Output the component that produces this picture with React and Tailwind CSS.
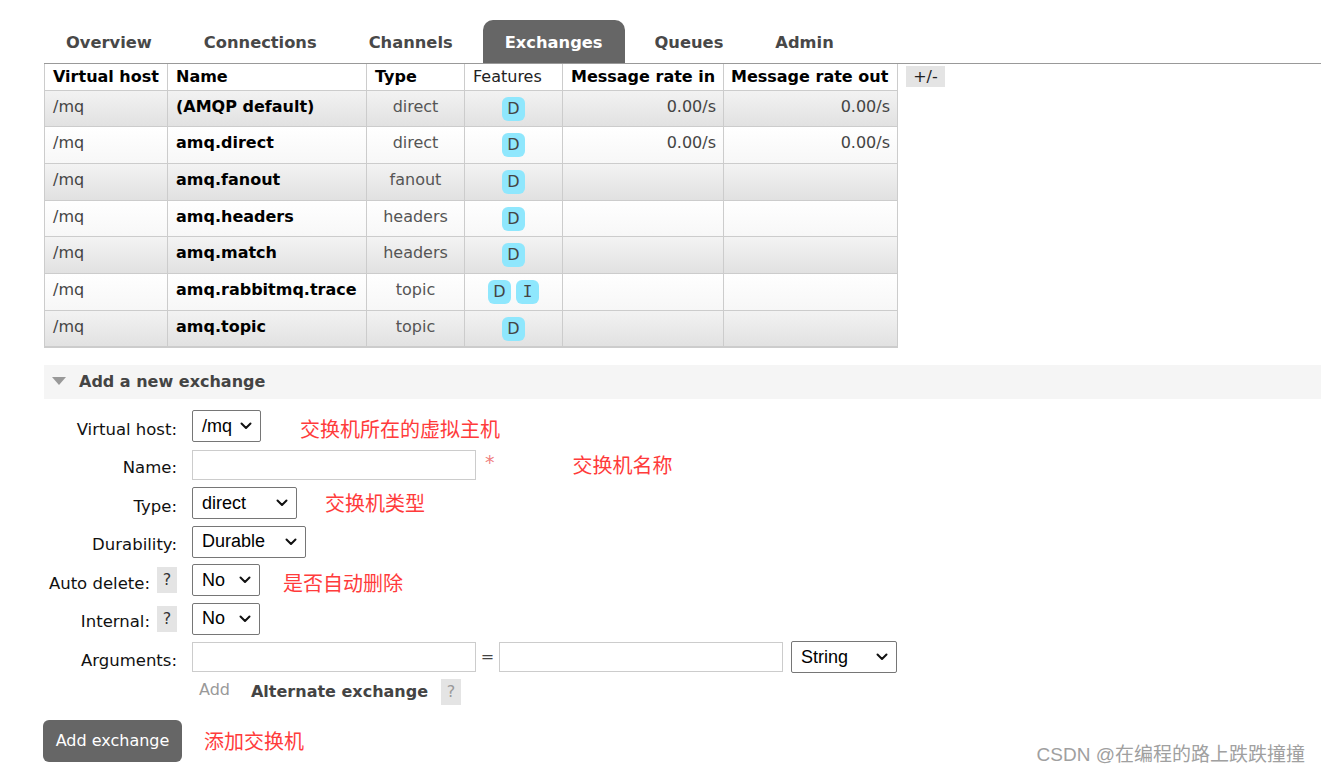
import React from "react";

const rows = [
  { name: "(AMQP default)", type: "direct", f: ["D"], rin: "0.00/s", rout: "0.00/s" },
  { name: "amq.direct", type: "direct", f: ["D"], rin: "0.00/s", rout: "0.00/s" },
  { name: "amq.fanout", type: "fanout", f: ["D"], rin: "", rout: "" },
  { name: "amq.headers", type: "headers", f: ["D"], rin: "", rout: "" },
  { name: "amq.match", type: "headers", f: ["D"], rin: "", rout: "" },
  { name: "amq.rabbitmq.trace", type: "topic", f: ["D", "I"], rin: "", rout: "" },
  { name: "amq.topic", type: "topic", f: ["D"], rin: "", rout: "" },
];

const tabs = ["Overview", "Connections", "Channels", "Exchanges", "Queues", "Admin"];

function Chevron() {
  return (
    <svg width="12" height="8" viewBox="0 0 12 8" className="shrink-0">
      <path d="M1.5 1.5 L6 6 L10.5 1.5" fill="none" stroke="#111" strokeWidth="2" strokeLinecap="round" strokeLinejoin="round" />
    </svg>
  );
}

function Select({ value, className }) {
  return (
    <div
      className={
        "flex items-center justify-between h-[32px] border border-[#767676] rounded-[2px] bg-white pl-[9px] pr-[8px] font-['Liberation_Sans',Arial,sans-serif] text-[18px] text-black " +
        className
      }
    >
      <span>{value}</span>
      <Chevron />
    </div>
  );
}

function Help({ light }) {
  return (
    <span
      className={
        "inline-flex items-center justify-center w-[20px] h-[26px] bg-[#e4e4e4] text-[16px] " +
        (light ? "text-[#999]" : "text-[#333]")
      }
    >
      ?
    </span>
  );
}

function Note({ children, className }) {
  return (
    <span
      className={
        "font-['Noto_Sans_CJK_SC','Noto_Sans',sans-serif] text-[20px] leading-none text-[#ff3b3b] " + (className || "")
      }
    >
      {children}
    </span>
  );
}

function Row({ label, help, children }) {
  return (
    <div className="flex items-center h-[38.5px]">
      <div className="w-[148px] pr-[15px] flex items-center justify-end gap-[7px] shrink-0">
        <span className="pt-[8px] text-[16.5px] text-[#111] whitespace-nowrap">{label}</span>
        {help && <Help />}
      </div>
      {children}
    </div>
  );
}

export default function App() {
  return (
    <div className="relative w-[1321px] h-[774px] overflow-hidden bg-white font-['DejaVu_Sans',Verdana,sans-serif] text-[#222]">
      {/* Tabs */}
      <div className="pt-[20px] pl-[44px]">
        <div className="flex gap-[8px] border-b border-[#999]">
          {tabs.map((t) => (
            <div
              key={t}
              className={
                "h-[43px] px-[22px] pt-[3px] flex items-center rounded-t-[10px] text-[16.3px] font-bold " +
                (t === "Exchanges" ? "bg-[#666] text-white" : "text-[#484848]")
              }
            >
              {t}
            </div>
          ))}
        </div>

        {/* Table */}
        <div className="flex items-start gap-[8px]">
          <table className="table-fixed border-collapse w-[853px] text-[16px]">
            <colgroup>
              <col className="w-[123px]" />
              <col className="w-[199px]" />
              <col className="w-[98px]" />
              <col className="w-[98px]" />
              <col className="w-[161px]" />
              <col className="w-[174px]" />
            </colgroup>
            <thead>
              <tr className="h-[26px] bg-white">
                <th className="text-left font-bold text-black pl-[8px] border-l border-r border-[#ccc] whitespace-nowrap">Virtual host</th>
                <th className="text-left font-bold text-black pl-[8px] border-r border-[#ccc]">Name</th>
                <th className="text-left font-bold text-black pl-[8px] border-r border-[#ccc]">Type</th>
                <th className="text-left font-normal text-[#222] pl-[8px] border-r border-[#ccc]">Features</th>
                <th className="text-left font-bold text-black pl-[8px] border-r border-[#ccc] whitespace-nowrap">Message rate in</th>
                <th className="text-left font-bold text-black pl-[7px] border-r border-[#ccc] whitespace-nowrap">Message rate out</th>
              </tr>
            </thead>
            <tbody>
              {rows.map((r, i) => (
                <tr
                  key={r.name}
                  className={
                    "h-[36.7px] " +
                    (i % 2 === 0
                      ? "bg-linear-to-b from-[#f3f3f3] to-[#e1e1e1]"
                      : "bg-linear-to-b from-white to-[#f7f7f7]")
                  }
                >
                  <td className="align-top pt-[6px] leading-[20px] pl-[8px] text-[#444] border-l border-r border-t border-[#ccc]">/mq</td>
                  <td className="align-top pt-[6px] leading-[20px] pl-[8px] font-bold text-black border-r border-t border-[#ccc] whitespace-nowrap">{r.name}</td>
                  <td className="align-top pt-[6px] leading-[20px] text-center text-[#555] border-r border-t border-[#ccc]">{r.type}</td>
                  <td className="align-top pt-[6px] border-r border-t border-[#ccc]">
                    <div className="flex justify-center gap-[5px]">
                      {r.f.map((f) => (
                        <span
                          key={f}
                          className={
                            "w-[23px] h-[24px] rounded-[6px] bg-[#8fe7fd] text-[#444] text-[16px] flex items-center justify-center " +
                            (f === "I" ? "font-['DejaVu_Sans_Mono',monospace]" : "")
                          }
                        >
                          {f}
                        </span>
                      ))}
                    </div>
                  </td>
                  <td className="align-top pt-[6px] leading-[20px] text-right pr-[7px] text-[#444] border-r border-t border-[#ccc]">{r.rin}</td>
                  <td className="align-top pt-[6px] leading-[20px] text-right pr-[7px] text-[#444] border-r border-t border-[#ccc]">{r.rout}</td>
                </tr>
              ))}
              <tr className="h-0">
                <td colSpan={6} className="p-0 border-t-2 border-[#ccc]"></td>
              </tr>
            </tbody>
          </table>
          <div className="mt-[2px] w-[39px] h-[21px] bg-[#e4e4e4] text-[16px] text-[#222] flex items-center justify-center">
            +/-
          </div>
        </div>

        {/* Section header */}
        <div className="mt-[17px] h-[34px] bg-[#f5f5f5] flex items-center pl-[8px] gap-[13px]">
          <svg width="14" height="9" viewBox="0 0 14 9">
            <path d="M0 0 L14 0 L7 8 Z" fill="#999" />
          </svg>
          <span className="text-[16px] font-bold text-[#444]">Add a new exchange</span>
        </div>

        {/* Form */}
        <div className="pt-[8px]">
          <Row label="Virtual host:">
            <Select value="/mq" className="w-[69px]" />
            <Note className="ml-[39px] mt-[6px]">交换机所在的虚拟主机</Note>
          </Row>
          <Row label="Name:">
            <div className="w-[284px] h-[30px] border border-[#ccc] bg-white"></div>
            <span className="ml-[9px] -mt-[4px] text-[#f08080] text-[19px]">*</span>
            <Note className="ml-[78px]">交换机名称</Note>
          </Row>
          <Row label="Type:">
            <Select value="direct" className="w-[105px]" />
            <Note className="ml-[28px]">交换机类型</Note>
          </Row>
          <Row label="Durability:">
            <Select value="Durable" className="w-[114px]" />
          </Row>
          <Row label="Auto delete:" help>
            <Select value="No" className="w-[68px]" />
            <Note className="ml-[23px] mt-[6px]">是否自动删除</Note>
          </Row>
          <Row label="Internal:" help>
            <Select value="No" className="w-[68px]" />
          </Row>
          <Row label="Arguments:">
            <div className="w-[284px] h-[30px] border border-[#ccc] bg-white"></div>
            <span className="w-[23px] text-center text-[16px] text-[#444]">=</span>
            <div className="w-[284px] h-[30px] border border-[#ccc] bg-white"></div>
            <Select value="String" className="ml-[8px] w-[106px]" />
          </Row>
          <div className="flex items-center h-[26px] mt-[3px] pl-[155px]">
            <span className="text-[16px] text-[#999] -mt-[4px]">Add</span>
            <span className="ml-[21px] text-[16px] font-bold text-[#444]">Alternate exchange</span>
            <span className="ml-[13px]">
              <Help light />
            </span>
          </div>
        </div>

        <div className="mt-[15px] flex items-center -ml-[1px]">
          <div className="h-[42px] w-[139px] rounded-[6px] bg-[#666] text-white text-[16px] flex items-center justify-center">
            Add exchange
          </div>
          <Note className="ml-[22px]">添加交换机</Note>
        </div>
      </div>

      {/* Watermark */}
      <div className="absolute right-[16px] top-[743px] font-['Liberation_Sans','Noto_Sans_CJK_SC',sans-serif] text-[19px] leading-[24px] text-[#a0a0a0] [text-shadow:0_0_1px_#fff]">
        CSDN @在编程的路上跌跌撞撞
      </div>
    </div>
  );
}
